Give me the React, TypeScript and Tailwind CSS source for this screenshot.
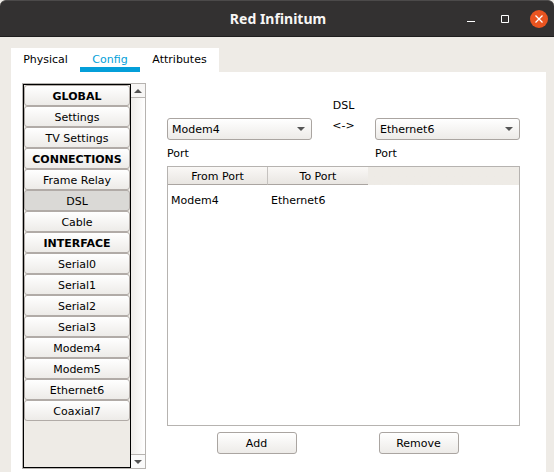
import { useState } from "react";

type Entry = { label: string; heading?: boolean };

const entries: Entry[] = [
  { label: "GLOBAL", heading: true },
  { label: "Settings" },
  { label: "TV Settings" },
  { label: "CONNECTIONS", heading: true },
  { label: "Frame Relay" },
  { label: "DSL" },
  { label: "Cable" },
  { label: "INTERFACE", heading: true },
  { label: "Serial0" },
  { label: "Serial1" },
  { label: "Serial2" },
  { label: "Serial3" },
  { label: "Modem4" },
  { label: "Modem5" },
  { label: "Ethernet6" },
  { label: "Coaxial7" },
];

const tabs = ["Physical", "Config", "Attributes"];
const modems = ["Modem4", "Modem5"];
const ethernets = ["Ethernet6", "Coaxial7"];
const raised = "bg-linear-to-b from-white to-[#edebe8]";

function TitleBar() {
  return (
    <div className="bg-[#eeebe6]">
      <header className="grid h-[37px] grid-cols-[1fr_auto_1fr] items-center rounded-t-md border-t border-b border-t-[#4c4a4a] border-b-[#1f1e1e] bg-[#333131] font-['Noto_Sans',sans-serif]">
        <h1 className="col-start-2 pl-0.5 text-[14px] leading-5 font-bold text-[#f7f6f5]">Red Infinitum</h1>
        <div className="flex items-center justify-end gap-4 pr-1.5">
          <button aria-label="Minimize" className="size-[18px]">
            <svg viewBox="0 0 18 18" className="size-[18px]">
              <path d="M5 11h8v1H5z" fill="#fff" />
            </svg>
          </button>
          <button aria-label="Maximize" className="size-[18px]">
            <svg viewBox="0 0 18 18" className="size-[18px]">
              <path d="M5.5 5.5h7v7h-7z" fill="none" stroke="#fff" />
            </svg>
          </button>
          <button aria-label="Close" className="size-[18px]">
            <svg viewBox="0 0 18 18" className="size-[18px]">
              <circle cx="9" cy="9" r="9" fill="#e95420" />
              <path d="M5.5 5.5l7 7M12.5 5.5l-7 7" stroke="#fff" strokeWidth="1.3" />
            </svg>
          </button>
        </div>
      </header>
    </div>
  );
}

function Sidebar({ active, onPick }: { active: string; onPick: (label: string) => void }) {
  return (
    <div className="flex w-[124px] shrink-0 border border-[#b6b3b0]">
      <nav className="w-[108px] border border-black bg-[#eeebe6]">
        {entries.map(({ label, heading }) => (
          <button
            key={label}
            onClick={() => onPick(label)}
            className={`block h-[21px] w-full rounded-[3px] border border-[#b1aba7] pt-0.5 text-center leading-[17px] ${
              heading ? "font-bold" : ""
            } ${label === active ? "bg-[#dad9d6]" : raised}`}
          >
            {label}
          </button>
        ))}
      </nav>
      <div className="flex flex-1 flex-col bg-linear-to-r from-[#eeece9] to-white">
        <button aria-label="Scroll up" className="flex h-3.5 items-center justify-center border-b border-[#b6b3b0] bg-[#f7f6f5]">
          <svg viewBox="0 0 8 4" className="h-1 w-2">
            <path d="M0 4L4 0l4 4z" fill="#555" />
          </svg>
        </button>
        <div className="flex-1" />
        <button aria-label="Scroll down" className="flex h-3.5 items-center justify-center border-t border-[#b6b3b0] bg-[#fafafa]">
          <svg viewBox="0 0 8 4" className="h-1 w-2">
            <path d="M0 0h8L4 4z" fill="#555" />
          </svg>
        </button>
      </div>
    </div>
  );
}

function PortSelect({ label, options }: { label: string; options: string[] }) {
  return (
    <div className="grid">
      <select
        aria-label={label}
        className={`col-start-1 row-start-1 h-[22px] w-full appearance-none rounded-[3px] border border-[#aaa5a1] pt-0.5 pl-1 ${raised}`}
      >
        {options.map((option) => (
          <option key={option}>{option}</option>
        ))}
      </select>
      <svg
        viewBox="0 0 8 4"
        className="pointer-events-none col-start-1 row-start-1 mr-[7px] h-1 w-2 self-center justify-self-end"
      >
        <path d="M0 0h8L4 4z" fill="#555" />
      </svg>
    </div>
  );
}

function ActionButton({ children }: { children: string }) {
  return (
    <button className={`h-[22px] w-20 rounded-[3px] border border-[#aaa5a1] pt-0.5 leading-[18px] ${raised}`}>
      {children}
    </button>
  );
}

export default function App() {
  const [tab, setTab] = useState("Config");
  const [active, setActive] = useState("DSL");

  return (
    <div className="flex min-h-screen flex-col bg-[#eeebe6] font-['DejaVu_Sans',sans-serif] text-[11px] leading-4 text-black">
      <TitleBar />
      <div className="flex flex-1 flex-col pt-[11px] pr-2 pl-[11px]">
        <div role="tablist" className="grid h-6 grid-cols-[69px_60px_79px] self-start bg-white">
          {tabs.map((name) => (
            <button
              key={name}
              role="tab"
              aria-selected={name === tab}
              onClick={() => setTab(name)}
              className={`border-b-5 pt-[5px] leading-[14px] ${
                name === tab ? "border-[#049fd9] text-[#049fd9]" : "border-transparent"
              }`}
            >
              {name}
            </button>
          ))}
        </div>
        <main className="flex flex-1 gap-[21px] bg-white pt-[11px] pr-[26px] pb-[3px] pl-[11px]">
          <Sidebar active={active} onPick={setActive} />
          <section className="flex flex-1 flex-col pt-[15px] pb-[15px]">
            <h2 className="text-center">DSL</h2>
            <div className="mt-1 grid grid-cols-[1fr_63px_1fr]">
              <PortSelect label="From port" options={modems} />
              <span className="text-center">&lt;-&gt;</span>
              <PortSelect label="To port" options={ethernets} />
              <span className="mt-1.5">Port</span>
              <span className="col-start-3 mt-1.5">Port</span>
            </div>
            <div className="mt-1 flex-1 border border-[#b6b3b0]">
              <div className="bg-linear-to-b from-[#eeebe6] from-[18px] to-transparent to-[18px]">
                <table className="w-[200px] table-fixed border-separate border-spacing-0">
                  <thead>
                    <tr className="h-[18px]">
                      {["From Port", "To Port"].map((title) => (
                        <th
                          key={title}
                          className="border-r border-b border-r-[#c5c2bf] border-b-[#aaa5a1] bg-linear-to-b from-[#faf8f6] to-[#e9e6e2] p-0 pt-0.5 leading-[15px] font-normal last:border-r-0"
                        >
                          {title}
                        </th>
                      ))}
                    </tr>
                  </thead>
                  <tbody>
                    <tr className="h-8">
                      <td className="p-0 pl-[3px]">Modem4</td>
                      <td className="p-0 pl-[3px]">Ethernet6</td>
                    </tr>
                  </tbody>
                </table>
              </div>
            </div>
            <div className="mt-1.5 flex justify-center gap-[82px] pr-3">
              <ActionButton>Add</ActionButton>
              <ActionButton>Remove</ActionButton>
            </div>
          </section>
        </main>
      </div>
    </div>
  );
}
